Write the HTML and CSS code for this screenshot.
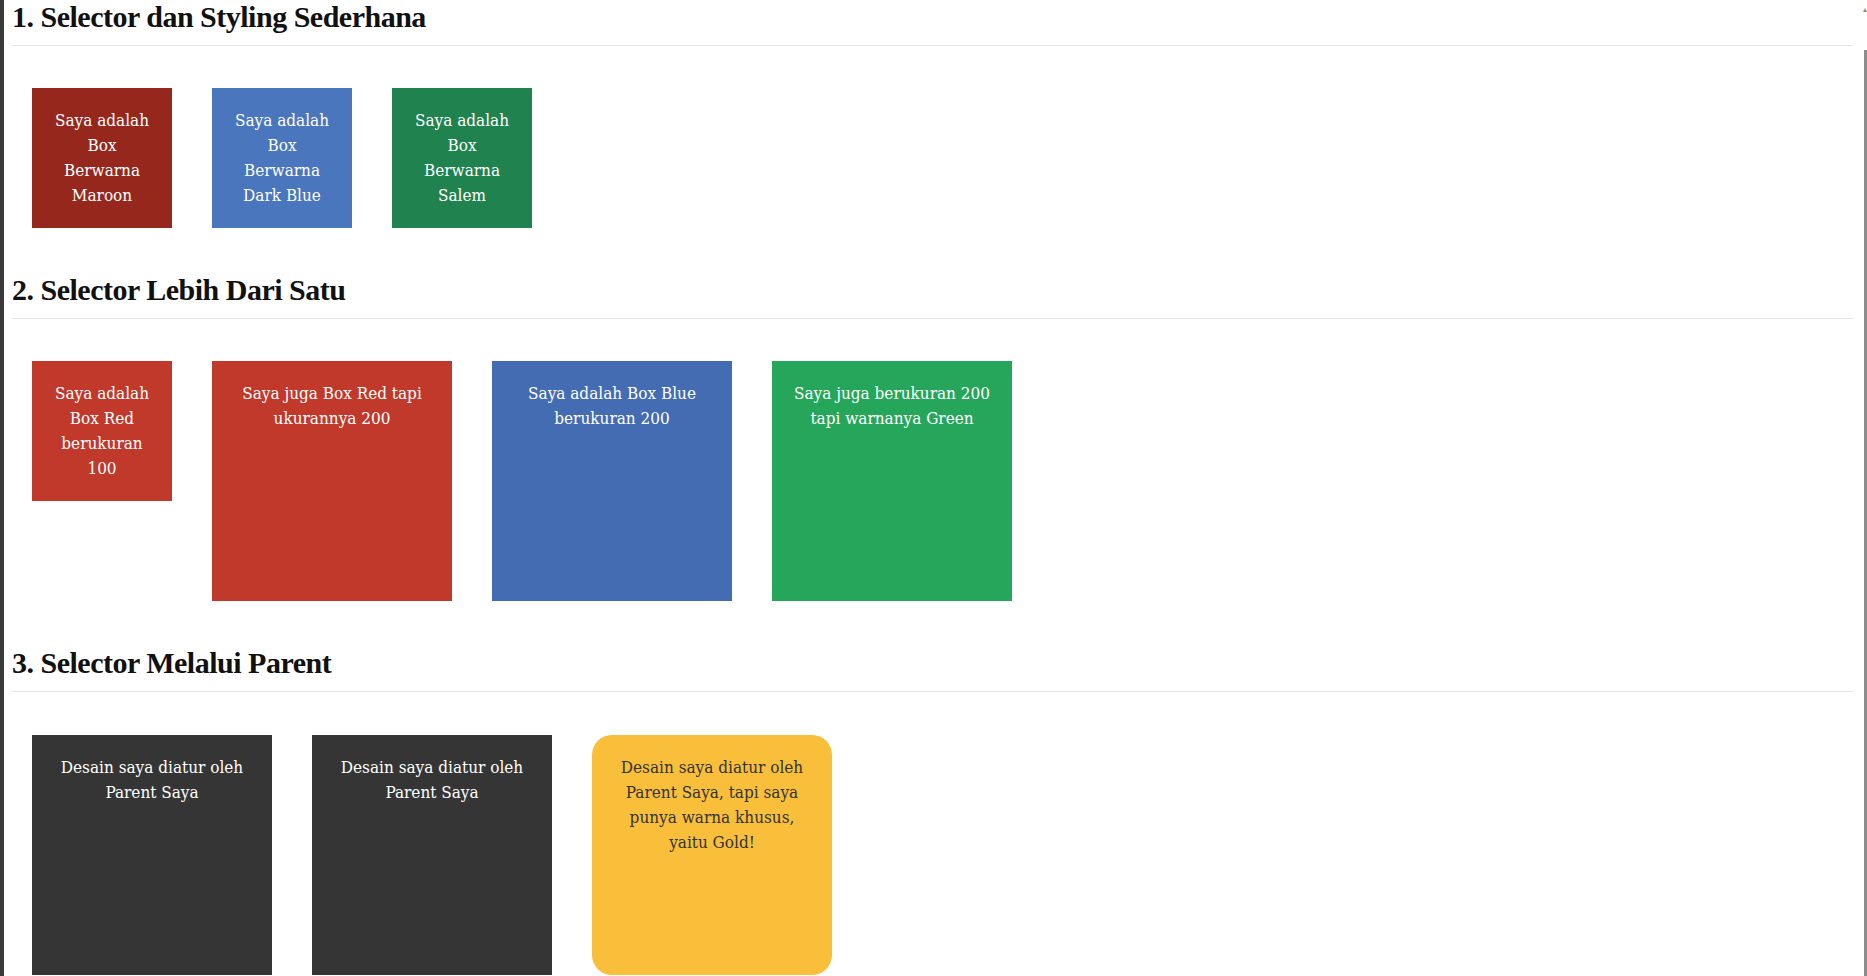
FILE: index.html
```html
<!DOCTYPE html>
<html lang="id">
<head>
<meta charset="utf-8">
<title>Selector CSS</title>
<link rel="stylesheet" href="styles.css">
</head>
<body>
<div class="edge"></div>
<main class="main">
  <section class="section">
    <h2 class="title">1. Selector dan Styling Sederhana</h2>
    <div class="row">
      <div class="box maroon">Saya adalah Box Berwarna Maroon</div>
      <div class="box darkblue">Saya adalah Box Berwarna Dark Blue</div>
      <div class="box salem">Saya adalah Box Berwarna Salem</div>
    </div>
  </section>
  <section class="section">
    <h2 class="title">2. Selector Lebih Dari Satu</h2>
    <div class="row">
      <div class="box red">Saya adalah Box Red berukuran 100</div>
      <div class="box red big">Saya juga Box Red tapi ukurannya 200</div>
      <div class="box blue big">Saya adalah Box Blue berukuran 200</div>
      <div class="box green big">Saya juga berukuran 200 tapi warnanya Green</div>
    </div>
  </section>
  <section class="section">
    <h2 class="title">3. Selector Melalui Parent</h2>
    <div class="row parent">
      <div class="box big dark">Desain saya diatur oleh Parent Saya</div>
      <div class="box big dark">Desain saya diatur oleh Parent Saya</div>
      <div class="box big gold">Desain saya diatur oleh Parent Saya, tapi saya punya warna khusus, yaitu Gold!</div>
    </div>
  </section>
</main>
<div class="gutter">
  <div class="arrow"></div>
  <div class="thumb"></div>
</div>
</body>
</html>
```

FILE: styles.css
```css
html, body {
  margin: 0;
  padding: 0;
  height: 976px;
  overflow: hidden;
  background: #fff;
}

body {
  display: flex;
  font-family: "DejaVu Serif Condensed", "DejaVu Serif", serif;
}

.edge {
  width: 4px;
  flex: none;
  background: #3a3a3a;
}

.main {
  flex: 1;
  padding: 0 8px;
  min-width: 0;
}

.gutter {
  width: 6px;
  flex: none;
  display: flex;
  flex-direction: column;
  align-items: flex-end;
  background: #fff;
}

.arrow {
  width: 0;
  height: 0;
  margin-top: 8px;
  border-left: 2px solid transparent;
  border-right: 2px solid transparent;
  border-bottom: 4px solid #b08a60;
}

.thumb {
  margin-top: 38px;
  width: 3px;
  flex: 1;
  background: #8c8c8c;
}

.title {
  margin: 0;
  font-family: "Liberation Serif", serif;
  font-weight: bold;
  font-size: 30px;
  line-height: 34px;
  letter-spacing: -0.5px;
  color: #111;
  padding-bottom: 11px;
  border-bottom: 1px solid #e6e6e6;
}

.row {
  display: flex;
  align-items: flex-start;
  padding: 22px 0 25px;
}

.row.parent {
  padding-top: 23px;
}

.box {
  width: 100px;
  height: 100px;
  padding: 20px;
  margin: 20px;
  color: #fff;
  text-align: center;
  font-size: 17px;
  line-height: 25px;
  flex: none;
}

.box.big {
  width: 200px;
  height: 200px;
}

.maroon { background: #95271d; }
.darkblue { background: #4a76bd; }
.salem { background: #1f824f; }
.red { background: #c0392b; }
.blue { background: #446cb3; }
.green { background: #26a65b; }
.dark { background: #353535; }
.gold {
  background: #f9bf3b;
  color: #333;
  border-radius: 20px;
}
```
